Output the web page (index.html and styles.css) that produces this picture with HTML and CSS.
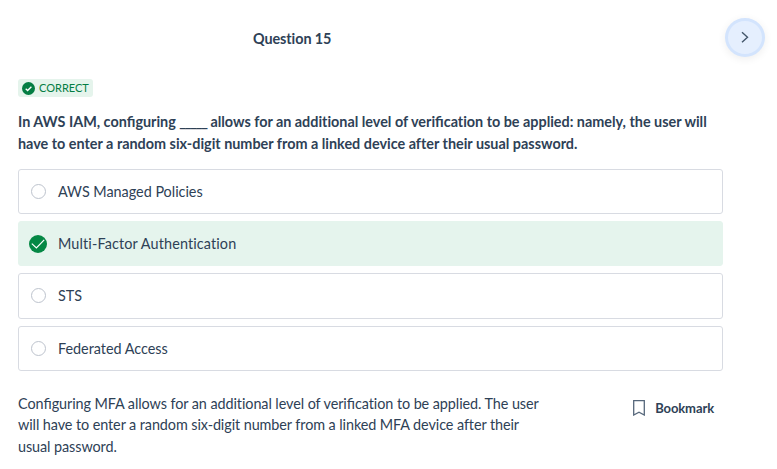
FILE: index.html
```html
<!DOCTYPE html>
<html lang="en">
<head>
<meta charset="utf-8">
<title>Question 15</title>
<link rel="stylesheet" href="styles.css">
</head>
<body>
<header class="topbar">
  <h1 class="title"><span class="fit">Question 15</span></h1>
  <button class="next" aria-label="Next question">
    <svg width="10" height="14" viewBox="0 0 10 14"><path d="M2 1.2 7.5 6.2 2 11.2" fill="none" stroke="#43566a" stroke-width="1.4"/></svg>
  </button>
</header>
<main class="content">
  <div class="badge">
    <svg width="13" height="13" viewBox="0 0 13 13"><circle cx="6.5" cy="6.5" r="6.5" fill="#047d43"/><path d="M3.7 6.7 5.6 8.5 9.4 4.7" fill="none" stroke="#fff" stroke-width="1.3"/></svg>
    <span class="fit">CORRECT</span>
  </div>
  <p class="question"><span class="fit q1">In AWS IAM, con<span class="lig">fi</span>guring <span class="blank">_____</span> allows for an additional level of veri<span class="lig">fi</span>cation to be applied: namely, the user will</span><br><span class="fit q2">have to enter a random six-digit number from a linked device after their usual password.</span></p>
  <ul class="options">
    <li class="option"><span class="radio"></span><span class="fit">AWS Managed Policies</span></li>
    <li class="option selected">
      <svg class="check" width="18" height="18" viewBox="0 0 18 18"><circle cx="9" cy="9" r="9" fill="#058845"/><path d="M2.8 8.6 7.4 13 15.2 4.8" fill="none" stroke="#fff" stroke-width="1.2"/></svg>
      <span class="fit">Multi-Factor Authentication</span></li>
    <li class="option"><span class="radio"></span><span class="fit">STS</span></li>
    <li class="option"><span class="radio"></span><span class="fit">Federated Access</span></li>
  </ul>
  <div class="footer">
    <p class="explanation"><span class="fit e1">Con<span class="lig">fi</span>guring MFA allows for an additional level of veri<span class="lig">fi</span>cation to be applied. The user</span><br><span class="fit e2">will have to enter a random six-digit number from a linked MFA device after their</span><br><span class="fit e2">usual password.</span></p>
    <div class="bookmark">
      <svg width="12" height="16" viewBox="0 0 12 16"><path d="M.7.7H11.3V15L6 12.2.7 15Z" fill="none" stroke="#56677b" stroke-width="1.3"/></svg>
      <span class="fit">Bookmark</span>
    </div>
  </div>
</main>
</body>
</html>
```
FILE: styles.css
```css
* { box-sizing: border-box; }
body {
  margin: 0;
  background: #fff;
  color: #2e4156;
  font-family: Lato, sans-serif;
  font-size: 14.4px;
}
h1, p, ul { margin: 0; padding: 0; }
svg { display: block; flex: none; }
.fit { white-space: nowrap; font-variant-ligatures: none; }
.lig { letter-spacing: 0; font-variant-ligatures: normal; }
.q1 .blank { letter-spacing: -1.2px; }
.topbar {
  display: flex;
  align-items: flex-start;
  justify-content: space-between;
  height: 79px;
  padding: 18px 12px 0 253px;
}
.title { font-size: 14.4px; line-height: 20px; font-weight: 700; padding-top: 11px; letter-spacing: -.08px; }
.next {
  display: flex;
  align-items: center;
  justify-content: center;
  width: 40px;
  height: 39px;
  padding: 0;
  border: 3px solid #d3e4fd;
  border-radius: 50%;
  background: #e5effe;
  box-shadow: 0 2px 8px rgba(0, 0, 0, .07);
}
.content { width: 723px; padding-left: 18px; }
.badge {
  display: flex;
  align-items: center;
  gap: 4px;
  width: 75px;
  height: 18px;
  padding-left: 4px;
  border-radius: 3px;
  background: #e5f4ec;
  color: #047d43;
  font-size: 11px;
}
.badge .fit { position: relative; top: -1px; }
.question { margin-top: 14px; font-weight: 700; line-height: 22px; }
.q1 { letter-spacing: -.01px; }
.options {
  display: grid;
  grid-auto-rows: 45px;
  gap: 7.3px;
  margin-top: 14px;
  list-style: none;
}
.option {
  display: flex;
  align-items: center;
  padding-left: 12px;
  border: 1px solid #d8dbe2;
  border-radius: 3px;
  letter-spacing: -.02px;
}
.option:nth-child(3) { height: 46px; margin-top: -1px; }
.radio {
  width: 15px;
  height: 15px;
  margin-right: 12px;
  border: 1px solid #bdc3cd;
  border-radius: 50%;
}
.option.selected { border-color: #e5f4ed; background: #e5f4ed; padding-left: 10px; letter-spacing: .13px; }
.check { margin-right: 11px; }
.footer { display: flex; justify-content: space-between; margin-top: 22px; }
.explanation { line-height: 21.6px; }
.e1 { letter-spacing: -.075px; }
.e2 { letter-spacing: -.08px; }
.bookmark {
  display: flex;
  align-items: center;
  gap: 10px;
  height: 31px;
  padding-right: 9px;
  font-size: 13px;
  font-weight: 700;
  letter-spacing: -.1px;
}
```
